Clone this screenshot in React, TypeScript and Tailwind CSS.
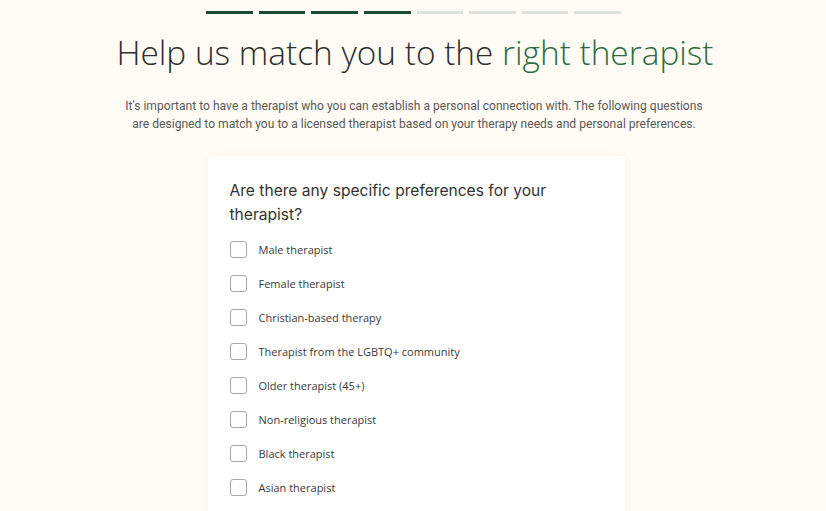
import React from "react";

const options = [
  "Male therapist",
  "Female therapist",
  "Christian-based therapy",
  "Therapist from the LGBTQ+ community",
  "Older therapist (45+)",
  "Non-religious therapist",
  "Black therapist",
  "Asian therapist",
];

export default function App() {
  return (
    <div className="w-[826px] h-[511px] overflow-hidden bg-[#fffcf5] flex flex-col items-center" style={{ fontFamily: "Inter, 'Noto Sans', sans-serif" }}>
      <div className="mt-[11px] ml-[1px] flex gap-[6px] w-[415px]">
        {[0, 1, 2, 3, 4, 5, 6, 7].map((i) => (
          <div key={i} className={"h-[3px] flex-1 " + (i < 4 ? "bg-[#1d4a32]" : "bg-[#dfe1dc]")} />
        ))}
      </div>
      <h1 className="mt-[16px] ml-[4px] text-[33.4px] leading-[44px] font-light text-[#2e2e2e]" style={{ fontFamily: "'Open Sans', sans-serif" }}>
        Help us match you to the <span className="text-[#2e6b40]">right therapist</span>
      </h1>
      <p className="mt-[23px] ml-[2px] text-[12.1px] leading-[18px] text-[#595959] text-center w-[588px]" style={{ fontFamily: "Roboto, sans-serif" }}>
        It's important to have a therapist who you can establish a personal connection with. The following questions are designed to match you to a licensed therapist based on your therapy needs and personal preferences.
      </p>
      <div className="mt-[23px] ml-[6px] w-[417px] bg-white rounded-[4px] shadow-[0_0_8px_rgba(0,0,0,0.04)] px-[22px] pt-[23px] pb-[20px]">
        <div className="text-[15.6px] leading-[24px] text-[#333333]">
          Are there any specific preferences for your therapist?
        </div>
        <div className="mt-[14px] flex flex-col gap-[17px]">
          {options.map((o) => (
            <label key={o} className="flex items-center gap-[12px]">
              <span className="w-[17px] h-[17px] rounded-[3px] border border-[#a8a8a8] bg-white shrink-0" />
              <span className="text-[11px] leading-[17px] text-[#3a3a3a]" style={{ fontFamily: "'Open Sans', sans-serif" }}>{o}</span>
            </label>
          ))}
        </div>
      </div>
    </div>
  );
}
